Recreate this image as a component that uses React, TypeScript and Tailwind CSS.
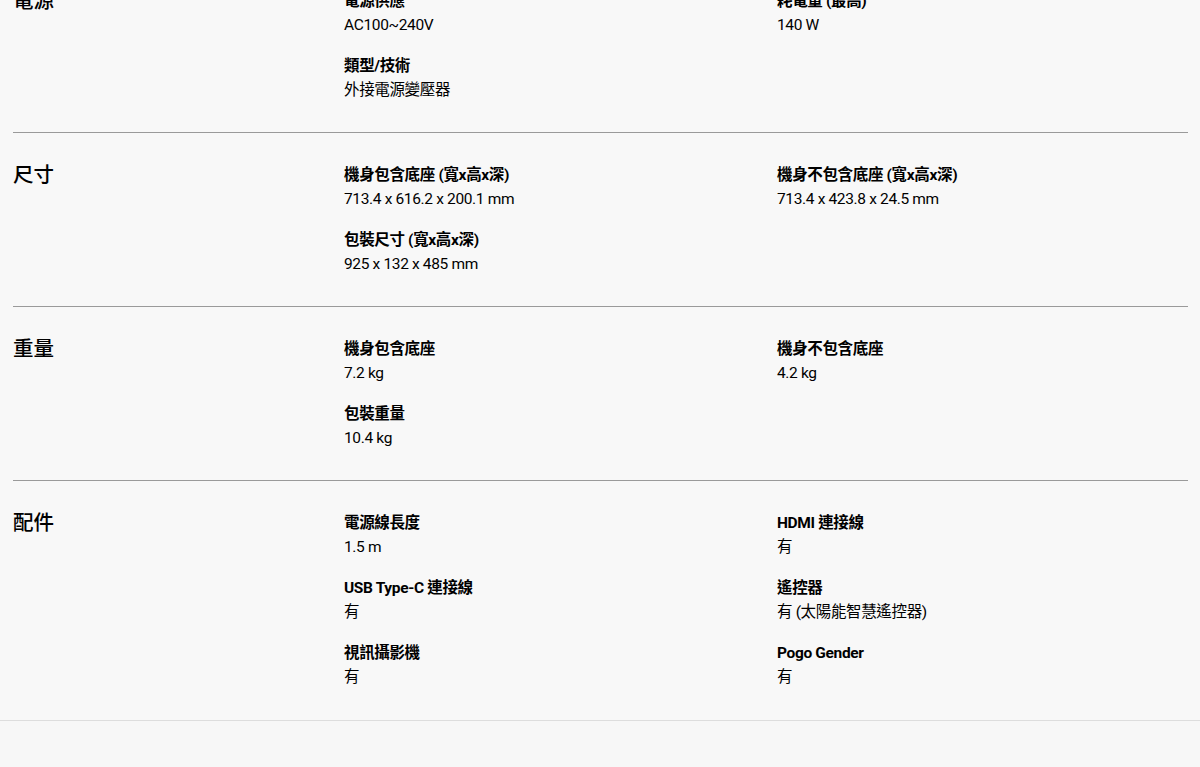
import React from "react";

type Item = { label: string; value: string };
type Section = { title: string; items: Item[] };

const sections: Section[] = [
  {
    title: "電源",
    items: [
      { label: "電源供應", value: "AC100~240V" },
      { label: "耗電量 (最高)", value: "140 W" },
      { label: "類型/技術", value: "外接電源變壓器" },
    ],
  },
  {
    title: "尺寸",
    items: [
      { label: "機身包含底座 (寬x高x深)", value: "713.4 x 616.2 x 200.1 mm" },
      { label: "機身不包含底座 (寬x高x深)", value: "713.4 x 423.8 x 24.5 mm" },
      { label: "包裝尺寸 (寬x高x深)", value: "925 x 132 x 485 mm" },
    ],
  },
  {
    title: "重量",
    items: [
      { label: "機身包含底座", value: "7.2 kg" },
      { label: "機身不包含底座", value: "4.2 kg" },
      { label: "包裝重量", value: "10.4 kg" },
    ],
  },
  {
    title: "配件",
    items: [
      { label: "電源線長度", value: "1.5 m" },
      { label: "HDMI 連接線", value: "有" },
      { label: "USB Type-C 連接線", value: "有" },
      { label: "遙控器", value: "有 (太陽能智慧遙控器)" },
      { label: "視訊攝影機", value: "有" },
      { label: "Pogo Gender", value: "有" },
    ],
  },
];

export default function App() {
  return (
    <div
      className="min-h-[767px] w-[1200px] overflow-hidden bg-[#f7f7f7] text-black"
      style={{ fontFamily: '"Roboto", "Noto Sans CJK TC", sans-serif' }}
    >
      <div className="-mt-[41px] border-b border-[#dddddd] bg-[#f8f8f8]">
        {sections.map((s, si) => {
          const last = si === sections.length - 1;
          return (
            <div
              key={s.title}
              className={`ml-[13px] mr-[12px] flex pt-[30px] ${
                last ? "pb-[31px]" : "pb-[30px] border-b border-[#9a9a9a]"
              }`}
            >
              <div className="w-[331px] shrink-0 text-[20.5px] font-medium leading-[24px]">
                {s.title}
              </div>
              <div className="grid w-[844px] grid-cols-[411px_411px] gap-x-[22px] gap-y-[17px]">
                {s.items.map((it) => (
                  <div key={it.label}>
                    <div className="text-[15.5px] font-bold leading-[24px] tracking-[-0.35px]">
                      {it.label}
                    </div>
                    <div className="text-[15.5px] leading-[24px] tracking-[-0.35px]">
                      {it.value}
                    </div>
                  </div>
                ))}
              </div>
            </div>
          );
        })}
      </div>
    </div>
  );
}
